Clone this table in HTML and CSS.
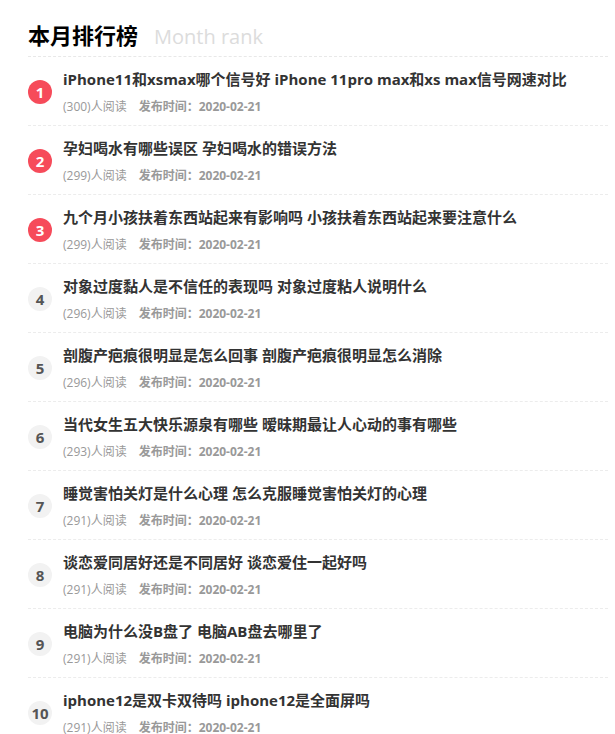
FILE: index.html
```html
<!DOCTYPE html>
<html lang="zh-CN">
<head>
    <meta charset="UTF-8">
    <meta name="viewport" content="width=device-width, initial-scale=1.0">
    <title>本月排行榜</title>
    <link rel="stylesheet" href="styles.css">
</head>
<body>
    <div class="rank-box">
        <div class="rank-head">
            <h2>本月排行榜</h2>
            <span class="sub">Month rank</span>
        </div>
        <ul class="rank-list">
            <li>
                <span class="num top">1</span>
                <div class="info">
                    <a href="#" class="title">iPhone11和xsmax哪个信号好 iPhone 11pro max和xs max信号网速对比</a>
                    <p class="meta"><span class="views">(300)人阅读</span><span class="date">发布时间：2020-02-21</span></p>
                </div>
            </li>
            <li>
                <span class="num top">2</span>
                <div class="info">
                    <a href="#" class="title">孕妇喝水有哪些误区 孕妇喝水的错误方法</a>
                    <p class="meta"><span class="views">(299)人阅读</span><span class="date">发布时间：2020-02-21</span></p>
                </div>
            </li>
            <li>
                <span class="num top">3</span>
                <div class="info">
                    <a href="#" class="title">九个月小孩扶着东西站起来有影响吗 小孩扶着东西站起来要注意什么</a>
                    <p class="meta"><span class="views">(299)人阅读</span><span class="date">发布时间：2020-02-21</span></p>
                </div>
            </li>
            <li>
                <span class="num">4</span>
                <div class="info">
                    <a href="#" class="title">对象过度黏人是不信任的表现吗 对象过度粘人说明什么</a>
                    <p class="meta"><span class="views">(296)人阅读</span><span class="date">发布时间：2020-02-21</span></p>
                </div>
            </li>
            <li>
                <span class="num">5</span>
                <div class="info">
                    <a href="#" class="title">剖腹产疤痕很明显是怎么回事 剖腹产疤痕很明显怎么消除</a>
                    <p class="meta"><span class="views">(296)人阅读</span><span class="date">发布时间：2020-02-21</span></p>
                </div>
            </li>
            <li>
                <span class="num">6</span>
                <div class="info">
                    <a href="#" class="title">当代女生五大快乐源泉有哪些 暧昧期最让人心动的事有哪些</a>
                    <p class="meta"><span class="views">(293)人阅读</span><span class="date">发布时间：2020-02-21</span></p>
                </div>
            </li>
            <li>
                <span class="num">7</span>
                <div class="info">
                    <a href="#" class="title">睡觉害怕关灯是什么心理 怎么克服睡觉害怕关灯的心理</a>
                    <p class="meta"><span class="views">(291)人阅读</span><span class="date">发布时间：2020-02-21</span></p>
                </div>
            </li>
            <li>
                <span class="num">8</span>
                <div class="info">
                    <a href="#" class="title">谈恋爱同居好还是不同居好 谈恋爱住一起好吗</a>
                    <p class="meta"><span class="views">(291)人阅读</span><span class="date">发布时间：2020-02-21</span></p>
                </div>
            </li>
            <li>
                <span class="num">9</span>
                <div class="info">
                    <a href="#" class="title">电脑为什么没B盘了 电脑AB盘去哪里了</a>
                    <p class="meta"><span class="views">(291)人阅读</span><span class="date">发布时间：2020-02-21</span></p>
                </div>
            </li>
            <li>
                <span class="num">10</span>
                <div class="info">
                    <a href="#" class="title">iphone12是双卡双待吗 iphone12是全面屏吗</a>
                    <p class="meta"><span class="views">(291)人阅读</span><span class="date">发布时间：2020-02-21</span></p>
                </div>
            </li>
        </ul>
    </div>
</body>
</html>
```

FILE: styles.css
```css
body {
    margin: 0;
    background-color: #fff;
    font-family: "Open Sans", "Noto Sans CJK SC", sans-serif;
    color: #333;
}
.rank-box {
    margin: 0 7px 0 28px;
    padding-top: 19px;
}
.rank-head {
    display: flex;
    align-items: baseline;
    gap: 16px;
    height: 37px;
    border-bottom: 1px dashed #e8e8e8;
}
.rank-head h2 {
    margin: 0;
    font-size: 22px;
    line-height: 32px;
    font-weight: bold;
    color: #000;
}
.rank-head .sub {
    font-size: 20px;
    color: #dcdcdc;
}
.rank-list {
    list-style: none;
    margin: 0;
    padding: 0;
}
.rank-list li {
    display: flex;
    align-items: center;
    gap: 11px;
    height: 69px;
    box-sizing: border-box;
    padding: 11px 0 9px;
    border-bottom: 1px dashed #ececec;
}
.num {
    flex: none;
    width: 24px;
    height: 24px;
    border-radius: 50%;
    background-color: #f2f2f2;
    color: #555;
    font-size: 15px;
    font-weight: bold;
    line-height: 24px;
    text-align: center;
}
.num.top {
    background-color: #f64b5a;
    color: #fff;
}
.info {
    display: flex;
    flex-direction: column;
    gap: 7px;
}
.info .title {
    height: 22px;
    font-size: 15px;
    line-height: 22px;
    font-weight: bold;
    color: #333;
    text-decoration: none;
    white-space: nowrap;
}
.meta {
    margin: 0;
    height: 19px;
    font-size: 12px;
    line-height: 19px;
    color: #999;
    white-space: nowrap;
}
.meta .date {
    margin-left: 12px;
    font-weight: bold;
}
```
